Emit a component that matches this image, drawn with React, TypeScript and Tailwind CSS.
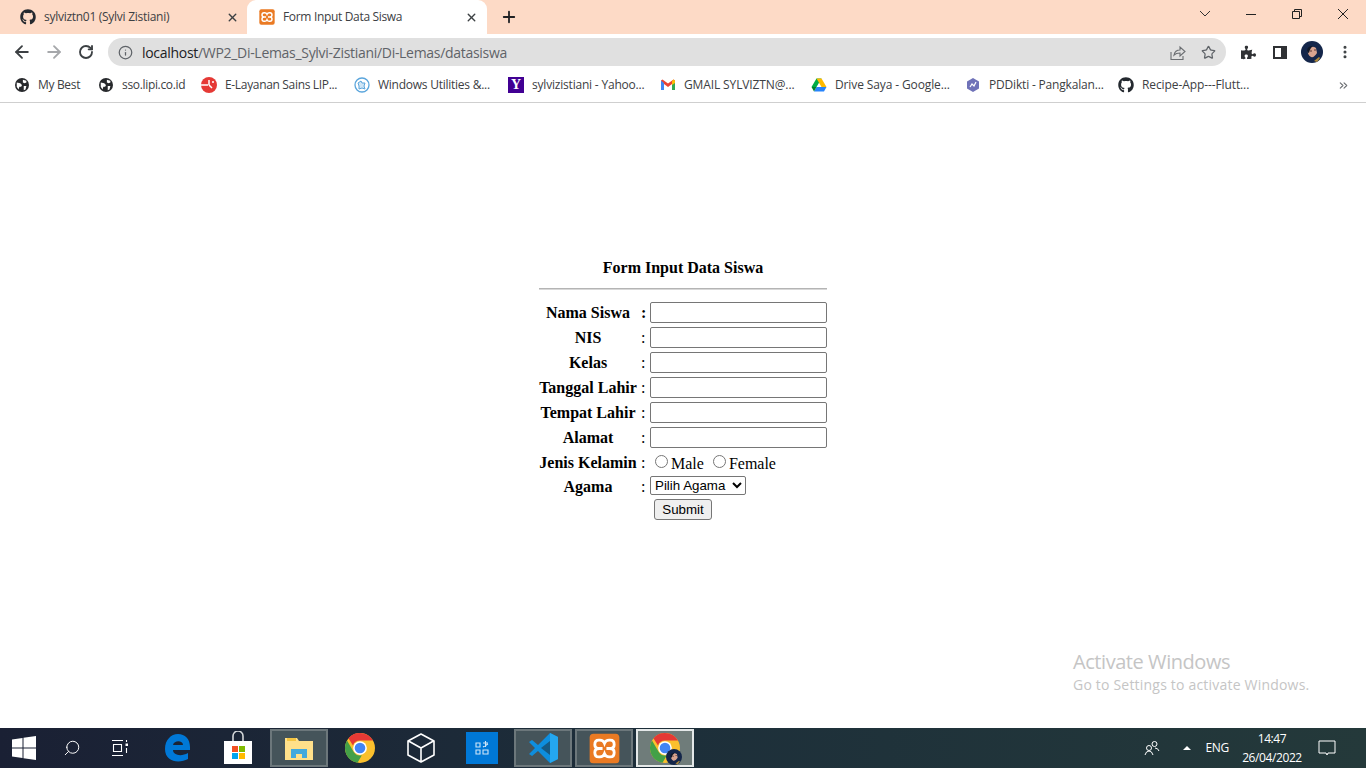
import { ArrowLeft, ArrowRight, ChevronsRight, Info, MoreVertical, Plus, RotateCw, Search, Star, X } from 'lucide-react';
import { FaGithub, FaPuzzlePiece } from 'react-icons/fa';

const uiFont = { fontFamily: '"Open Sans", "Noto Sans", sans-serif' };

// --- small drawn logos ---
function Globe({ size = 14 }: { size?: number }) {
  return (
    <svg width={size} height={size} viewBox="0 0 16 16">
      <circle cx="8" cy="8" r="8" fill="#27292c" />
      <path d="M2 5l4 1 2 2-1 2-2 0-1 3-2-3zM9 2l4 1 0 2-2 1-2-1zM10 9l3 0-1 4-2 1z" fill="#fff" />
    </svg>
  );
}

function Xampp({ size = 16 }: { size?: number }) {
  return (
    <svg width={size} height={size} viewBox="0 0 24 24">
      <rect x="0.5" y="0.5" width="23" height="23" rx="3" fill="#ea7a23" />
      <path
        d="M12 8Q11 5.500 8.500 5.500H7.500Q4.500 5.500 4.500 9 4.500 12 8 12 4.500 12 4.500 15 4.500 18.500 7.500 18.500H8.500Q11 18.500 12 16 13 18.500 15.500 18.500H16.500Q19.500 18.500 19.500 15 19.500 12 16 12 19.500 12 19.500 9 19.500 5.500 16.500 5.500H15.500Q13 5.500 12 8ZM8 12H10.500M16 12H13.500"
        fill="none"
        stroke="#fff"
        strokeWidth="2.2"
      />
    </svg>
  );
}

function ChromeLogo({ size = 30 }: { size?: number }) {
  return (
    <svg width={size} height={size} viewBox="0 0 48 48">
      <circle cx="24" cy="24" r="24" fill="#fbc02d" />
      <path d="M24 0a24 24 0 0 1 20.800 12H24a12 12 0 0 0-11.300 8L5.500 8.500A24 24 0 0 1 24 0z" fill="#e53935" />
      <path d="M3.200 12 14 30.500a12 12 0 0 0 13 5.200L20 47.700A24 24 0 0 1 3.200 12z" fill="#43a047" />
      <circle cx="24" cy="24" r="11" fill="#fff" />
      <circle cx="24" cy="24" r="8.500" fill="#4285f4" />
    </svg>
  );
}

function Avatar({ size = 22 }: { size?: number }) {
  return (
    <svg width={size} height={size} viewBox="0 0 22 22">
      <circle cx="11" cy="11" r="11" fill="#14264a" />
      <path d="M7 8q4-4 8-1l1 5q-3 5-6 4-4-2-3-8z" fill="#d9a48f" />
      <path d="M6 10q0-5 6-5-3 2-4 7-1 0-2-2z" fill="#101828" />
      <path d="M9 10h2M13 9h2" stroke="#3a2020" strokeWidth="0.8" />
      <path d="M13 20l5-4 1 1-3 4z" fill="#b08a3a" />
    </svg>
  );
}

function Gmail() {
  return (
    <svg width="16" height="16" viewBox="0 0 16 16">
      <path d="M1 3.500V13h3V7l4 3 4-3v6h3V3.500L13.500 2.500 8 6.500 2.500 2.500z" fill="#ea4335" />
      <path d="M1 3.500V13h3V6z" fill="#4285f4" />
      <path d="M12 6v7h3V3.500z" fill="#34a853" />
      <path d="M13.500 2.500 15 3.500V6l-3 2V4z" fill="#fbbc04" />
    </svg>
  );
}

function Drive() {
  return (
    <svg width="16" height="16" viewBox="0 0 16 16">
      <path d="M5.500 1.500h5l-5 8.500H0.500z" fill="#00ac47" />
      <path d="M5.500 1.500h5l5 8.500h-5z" fill="#ffba00" />
      <path d="M3 14.500 5.500 10h10L13 14.500z" fill="#2684fc" />
      <path d="M0.500 10h5L3 14.500z" fill="#00832d" />
    </svg>
  );
}

function Bookmark({ icon, label, className }: { icon: React.ReactNode; label: string; className: string }) {
  return (
    <div className={`flex items-center gap-[8px] pl-[8px] shrink-0 ${className}`}>
      <span className="flex w-[16px] h-[16px] items-center justify-center">{icon}</span>
      <span className="text-[12px] text-[#3c4043] whitespace-nowrap">{label}</span>
    </div>
  );
}

function TopChrome() {
  return (
    <div style={uiFont} className="shrink-0">
      {/* tab strip */}
      <div className="h-[34px] bg-[#fddac6] flex items-end pl-[8px]">
        <div className="w-[239px] h-[34px] flex items-center pl-[12px] pr-[8px] gap-[8px]">
          <FaGithub size={16} color="#24292f" />
          <span className="text-[12px] tracking-[-0.28px] text-[#3c4043] flex-1">sylviztn01 (Sylvi Zistiani)</span>
          <X size={13} strokeWidth={2.6} color="#3c4043" />
        </div>
        <div className="w-[240px] h-[34px] bg-white rounded-t-[9px] flex items-center pl-[12px] pr-[9px] gap-[8px]">
          <Xampp size={16} />
          <span className="text-[12px] tracking-[-0.33px] text-[#3c4043] flex-1">Form Input Data Siswa</span>
          <X size={13} strokeWidth={2.6} color="#3c4043" />
        </div>
        <div className="w-[44px] h-[34px] flex items-center justify-center">
          <Plus size={18} strokeWidth={2.4} color="#202124" />
        </div>
        <div className="flex-1 h-[34px] flex items-center justify-end">
          <svg width="12" height="8" viewBox="0 0 12 8" className="mr-[17px] mb-[6px]">
            <path d="M1 1l5 5 5-5" fill="none" stroke="#333" strokeWidth="1" />
          </svg>
          <div className="w-[46px] flex justify-center mb-[6px]">
            <div className="w-[10px] h-px bg-[#222]" />
          </div>
          <div className="w-[46px] flex justify-center mb-[6px]">
            <svg width="12" height="12" viewBox="0 0 12 12">
              <path d="M1.500 3.500h7v7h-7zM3.500 3.500v-2h7v7h-2" fill="none" stroke="#222" strokeWidth="1" />
            </svg>
          </div>
          <div className="w-[46px] flex justify-center mb-[6px]">
            <svg width="12" height="12" viewBox="0 0 12 12">
              <path d="M1 1l10 10M11 1 1 11" fill="none" stroke="#222" strokeWidth="1" />
            </svg>
          </div>
        </div>
      </div>

      {/* toolbar */}
      <div className="h-[36px] bg-white flex items-center">
        <div className="w-[44px] flex justify-center">
          <ArrowLeft size={20} strokeWidth={2.2} color="#3c4043" />
        </div>
        <div className="w-[20px] flex justify-center">
          <ArrowRight size={20} strokeWidth={2.2} color="#a6a8ab" />
        </div>
        <div className="w-[44px] flex justify-center">
          <RotateCw size={16} strokeWidth={2.8} color="#3c4043" />
        </div>
        <div className="w-[1118px] h-[28px] rounded-full bg-[#e0e0e0] flex items-center pl-[10px] pr-[10px]">
          <Info size={15} strokeWidth={2} color="#5f6368" />
          <span className="ml-[9px] text-[14px] tracking-[-0.3px] text-[#5f6368] flex-1 whitespace-nowrap">
            <span className="text-[#202124]">localhost</span>/WP2_Di-Lemas_Sylvi-Zistiani/Di-Lemas/datasiswa
          </span>
          <svg width="17" height="17" viewBox="0 0 17 17" className="mr-[15px]">
            <path d="M2 8v7.500h12V12M5 11q1-5 6-5V3l5 4.500-5 4.500V9q-4 0-6 2z" fill="none" stroke="#6b6e72" strokeWidth="1.100" />
          </svg>
          <Star size={15} strokeWidth={2} color="#5f6368" />
        </div>
        <div className="w-[42px] shrink-0 flex justify-center pl-[2px]">
          <FaPuzzlePiece size={15} color="#2f3134" />
        </div>
        <div className="w-[24px] shrink-0 flex justify-center">
          <div className="w-[14px] h-[13px] border-[2px] border-r-[6px] border-[#2f3134] bg-white" />
        </div>
        <div className="w-[40px] shrink-0 flex justify-center">
          <Avatar />
        </div>
        <div className="w-[26px] shrink-0 flex justify-center">
          <MoreVertical size={16} strokeWidth={2.6} color="#3c4043" />
        </div>
      </div>

      {/* bookmarks */}
      <div className="h-[33px] bg-white border-b border-[#cfcfcf] flex items-center pl-[6px] pb-[3px] relative">
        <Bookmark className="w-[84px] tracking-[-0.33px]" icon={<Globe />} label="My Best" />
        <Bookmark className="w-[103px] tracking-[-0.33px]" icon={<Globe />} label="sso.lipi.co.id" />
        <Bookmark
          className="w-[153px] tracking-[-0.33px]"
          icon={
            <svg width="16" height="16" viewBox="0 0 16 16">
              <circle cx="8" cy="8" r="8" fill="#e53935" />
              <path d="M0 8h7M8 3v5M11 5h2M8 8l3 3" stroke="#fff" strokeWidth="1.500" />
            </svg>
          }
          label="E-Layanan Sains LIP..."
        />
        <Bookmark
          className="w-[154px] tracking-[-0.25px]"
          icon={
            <svg width="16" height="16" viewBox="0 0 16 16">
              <circle cx="8" cy="8" r="7" fill="none" stroke="#5aa5dc" strokeWidth="1.300" />
              <path d="M4 6l3-2 1 2 3 0-1 3 1 3-3-1-3 1 0-3z" fill="#cfe5f5" stroke="#5aa5dc" strokeWidth="1" />
            </svg>
          }
          label="Windows Utilities &..."
        />
        <Bookmark
          className="w-[152px] tracking-[-0.2px]"
          icon={
            <span className="w-[16px] h-[16px] bg-[#410093] text-white flex items-center justify-center text-[14px] font-bold" style={{ fontFamily: '"Liberation Serif", serif' }}>
              Y
            </span>
          }
          label="sylvizistiani - Yahoo..."
        />
        <Bookmark className="w-[151px] tracking-[-0.12px]" icon={<Gmail />} label="GMAIL SYLVIZTN@..." />
        <Bookmark className="w-[154px] tracking-[-0.12px]" icon={<Drive />} label="Drive Saya - Google..." />
        <Bookmark
          className="w-[153px] tracking-[-0.18px]"
          icon={
            <svg width="16" height="16" viewBox="0 0 16 16">
              <path d="M8 1l6 3.500v7L8 15l-6-3.500v-7z" fill="#6f72b8" />
              <path d="M5 10l2-3 2 2 2-4" fill="none" stroke="#fff" strokeWidth="1.200" />
            </svg>
          }
          label="PDDikti - Pangkalan..."
        />
        <Bookmark className="w-[150px] tracking-[-0.1px]" icon={<FaGithub size={16} color="#24292f" />} label="Recipe-App---Flutt..." />
        <ChevronsRight size={13} strokeWidth={2} color="#6b6e72" className="absolute right-[16px] top-[9px]" />
      </div>
    </div>
  );
}

type FieldRow = { label: string; strongColon?: boolean };

const textFields: FieldRow[] = [
  { label: 'Nama Siswa', strongColon: true },
  { label: 'NIS' },
  { label: 'Kelas' },
  { label: 'Tanggal Lahir' },
  { label: 'Tempat Lahir' },
  { label: 'Alamat' },
];

function Label({ children }: { children: React.ReactNode }) {
  return <span className="w-[98px] text-center font-bold whitespace-nowrap leading-[22px]">{children}</span>;
}

function FormSiswa() {
  return (
    <form className="w-[288px] mx-auto text-[16px] text-black" style={{ fontFamily: '"Liberation Serif", serif' }}>
      <h1 className="text-center text-[16px] font-bold leading-[18px] pt-[1px]">Form Input Data Siswa</h1>
      <div className="mt-[11px] mb-[12px] h-[2px] bg-[#b4b4b4] border-b border-[#d8d8d8]" />
      {textFields.map((f) => (
        <div key={f.label} className="h-[25px] flex items-start">
          <Label>{f.label}</Label>
          <span className={`w-[13px] pl-[4px] leading-[21px] ${f.strongColon ? 'font-bold' : ''}`}>:</span>
          <input type="text" className="w-[177px] h-[21px] bg-white border border-[#767676] rounded-[2px]" />
        </div>
      ))}
      <div className="h-[24px] flex items-center -mt-[1px]">
        <Label>Jenis Kelamin</Label>
        <span className="w-[13px] pl-[4px]">:</span>
        <input type="radio" name="jk" className="w-[13px] h-[13px] ml-[5px] mr-[3px] -mt-[4px]" />
        <span className="mt-[2px]">Male</span>
        <input type="radio" name="jk" className="w-[13px] h-[13px] ml-[9px] mr-[3px] -mt-[4px]" />
        <span className="mt-[2px]">Female</span>
      </div>
      <div className="h-[23px] flex items-center">
        <Label>Agama</Label>
        <span className="w-[13px] pl-[4px]">:</span>
        <select
          className="w-[96px] h-[19px] -mt-[2px] bg-white border border-[#767676] rounded-[2px] text-[13.333px]"
          style={{ fontFamily: '"Liberation Sans", Arial, sans-serif' }}
        >
          <option>Pilih Agama</option>
        </select>
      </div>
      <div className="flex justify-center mt-[1px]">
        <button
          type="button"
          className="mx-auto w-[58px] h-[21px] bg-[#efefef] border border-[#767676] rounded-[3px] text-[13.333px] leading-none"
          style={{ fontFamily: '"Liberation Sans", Arial, sans-serif' }}
        >
          Submit
        </button>
      </div>
    </form>
  );
}

function TaskSlot({ w, active, strong, ml, children }: { w: number; active?: boolean; strong?: boolean; ml?: number; children: React.ReactNode }) {
  return (
    <div
      style={{ width: w, marginLeft: ml ?? 0 }}
      className={`h-[38px] flex items-center justify-center shrink-0 ${
        strong ? 'bg-[#6f7c7a] border-2 border-[#e4e8e8]' : active ? 'bg-[#45545a] border-2 border-[#6c777b]' : ''
      }`}
    >
      {children}
    </div>
  );
}

function Taskbar() {
  return (
    <div style={uiFont} className="h-[40px] shrink-0 flex items-center bg-gradient-to-r from-[#1a2034] via-[#1d2f3a] to-[#24393a] text-white">
      <TaskSlot w={48}>
        <svg width="24" height="24" viewBox="0 0 24 24">
          <path d="M0 3.500 10.500 2v9.500H0zM11.500 1.800 24 0v11.500H11.500zM0 12.500h10.500V22L0 20.500zM11.500 12.500H24V24l-12.500-1.800z" fill="#fff" />
        </svg>
      </TaskSlot>
      <TaskSlot w={48}>
        <Search size={18} strokeWidth={1.3} className="-scale-x-100" />
      </TaskSlot>
      <TaskSlot w={48}>
        <svg width="18" height="18" viewBox="0 0 18 18">
          <path d="M1 1.500h11M1 16.500h11M2.500 5.500h8v7h-8z" fill="none" stroke="#fff" strokeWidth="1.100" />
          <rect x="14.500" y="4.500" width="2.500" height="2.500" fill="#fff" />
          <path d="M15.500 1v2M15.500 9v5" stroke="#fff" strokeWidth="1.100" />
        </svg>
      </TaskSlot>
      <TaskSlot w={66}>
        <svg width="26" height="28" viewBox="0 0 26 28">
          <path
            d="M1 15C1 6 7 0 14 0c7 0 12 5 12 13v3H9c0 5 8 7 15 3v6c-9 5-23 3-23-10zM9 11h10c0-5-9-5-10 0z"
            fill="#0078d7"
          />
        </svg>
      </TaskSlot>
      <TaskSlot w={58} ml={-1}>
        <svg width="28" height="34" viewBox="0 0 28 34">
          <path d="M9 12V5a5 5 0 0 1 10 0v7" fill="none" stroke="#d5d8da" strokeWidth="1.600" />
          <rect x="0" y="10" width="28" height="23" fill="#fff" />
          <rect x="8" y="15" width="6" height="6" fill="#f25022" />
          <rect x="15" y="15" width="6" height="6" fill="#7fba00" />
          <rect x="8" y="22" width="6" height="6" fill="#00a4ef" />
          <rect x="15" y="22" width="6" height="6" fill="#ffb900" />
        </svg>
      </TaskSlot>
      <TaskSlot w={58} ml={3} active>
        <svg width="28" height="24" viewBox="0 0 28 24">
          <path d="M0 2h12l2 3h14v19H0z" fill="#ffe08a" />
          <rect x="2" y="2" width="9" height="3" fill="#f5c542" />
          <path d="M6 22v-9h16v9h-5v-4h-6v4z" fill="#42a9dd" />
        </svg>
      </TaskSlot>
      <TaskSlot w={64}>
        <ChromeLogo />
      </TaskSlot>
      <TaskSlot w={58}>
        <svg width="28" height="30" viewBox="0 0 28 30">
          <path d="M14 1 27 8v14l-13 7-13-7V8zM1.500 8 14 15l12.500-7M14 15v14" fill="none" stroke="#fff" strokeWidth="1.600" strokeLinejoin="round" />
        </svg>
      </TaskSlot>
      <TaskSlot w={32} ml={16}>
        <div className="w-[32px] h-[32px] bg-[#0078d7] flex items-center justify-center">
          <svg width="14" height="16" viewBox="0 0 14 16">
            <path d="M1 3h4v4H1zM1 10h4v4H1zM8 3h5M10.500 1v6M8 7l5-3M8 10h5v4H8z" fill="none" stroke="#cfe6f8" strokeWidth="1.100" />
          </svg>
        </div>
      </TaskSlot>
      <TaskSlot w={58} ml={16} active>
        <svg width="32" height="32" viewBox="0 0 32 32">
          <path d="M23 1 31 5v22l-8 4L11 19l-6 5-3-2 6-6-6-6 3-2 6 5z" fill="#0e8ede" />
          <path d="M23 1 31 5v22l-8 4z" fill="#24a7f0" />
          <path d="M23 9 14 16l9 7z" fill="#1d2f3a" opacity="0.55" />
        </svg>
      </TaskSlot>
      <TaskSlot w={58} ml={3} active>
        <Xampp size={31} />
      </TaskSlot>
      <TaskSlot w={58} ml={3} strong>
        <div className="relative w-[30px] h-[30px]">
          <ChromeLogo />
          <div className="absolute -right-[2px] -bottom-[2px]">
            <Avatar size={16} />
          </div>
        </div>
      </TaskSlot>

      {/* tray */}
      <div className="ml-auto flex items-center h-full">
        <svg width="16" height="16" viewBox="0 0 16 16" className="mr-[23px]">
          <circle cx="10.500" cy="4" r="2.500" fill="none" stroke="#fff" />
          <circle cx="5" cy="8" r="2.500" fill="none" stroke="#fff" />
          <path d="M1 15q1-4 4-4t4 4M11 8q3 0 4 3" fill="none" stroke="#fff" />
        </svg>
        <div className="w-0 h-0 border-x-[4px] border-x-transparent border-b-[4px] border-b-white mr-[14px]" />
        <span className="text-[12px] tracking-[-0.3px] mr-[13px]">ENG</span>
        <div className="flex flex-col items-center text-[12px] tracking-[-0.4px] leading-[19px] w-[60px]">
          <span>14:47</span>
          <span>26/04/2022</span>
        </div>
        <svg width="18" height="16" viewBox="0 0 18 16" className="ml-[16px] mr-[30px]">
          <path d="M1 1h16v12H10l-1 2-1-2H1z" fill="none" stroke="#fff" />
        </svg>
      </div>
    </div>
  );
}

export default function App() {
  return (
    <div className="w-[1366px] h-[768px] flex flex-col overflow-hidden bg-white">
      <TopChrome />
      <main className="flex-1 relative pt-[155px]">
        <FormSiswa />
        {/* Windows watermark */}
        <div style={uiFont} className="absolute left-[1073px] top-[547px] text-[#c5c5c5] whitespace-nowrap">
          <div className="text-[20px] tracking-[-0.44px] leading-[24px]">Activate Windows</div>
          <div className="text-[14px] tracking-[0.2px] leading-[20px] mt-[1px]">Go to Settings to activate Windows.</div>
        </div>
      </main>
      <Taskbar />
    </div>
  );
}
